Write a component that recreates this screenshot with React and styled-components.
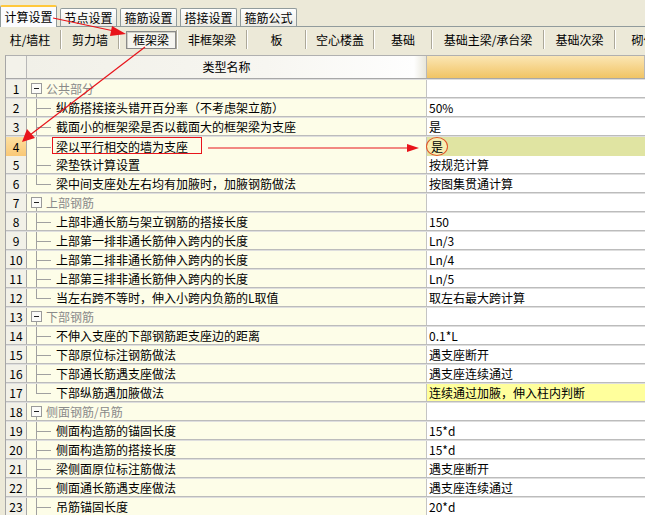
import React from "react";
import styled, { createGlobalStyle, css } from "styled-components";

const GlobalStyle = createGlobalStyle`
  html, body {
    margin: 0;
    padding: 0;
    background: #ece9d8;
  }
  body {
    font-family: "Noto Sans CJK SC", "Liberation Sans", sans-serif;
    font-size: 12px;
    color: #000;
  }
`;

const Window = styled.div`
  position: relative;
  width: 645px;
  height: 515px;
  overflow: hidden;
  background: #ece9d8;
`;

const TabStrip = styled.div`
  display: flex;
  align-items: flex-end;
  gap: 3px;
  height: 27px;
  box-sizing: border-box;
  border-bottom: 1px solid #919b9c;
`;

const Tab = styled.div`
  width: 57px;
  height: 18px;
  box-sizing: border-box;
  display: flex;
  align-items: center;
  justify-content: center;
  line-height: 16px;
  border: 1px solid #919b9c;
  border-bottom: none;
  border-radius: 2px 2px 0 0;
  background: linear-gradient(#ffffff, #ecebe5);
  white-space: nowrap;
  ${(p) =>
    p.$active &&
    css`
      height: 22px;
      margin-bottom: -1px;
      border-top: 2px solid #ffc83c;
      background: #fcfcfe;
    `}
`;

const SubBar = styled.div`
  display: flex;
  height: 25px;
  align-items: stretch;
  white-space: nowrap;
`;

const SubTab = styled.div`
  flex: none;
  width: ${(p) => p.$w}px;
  box-sizing: border-box;
  display: flex;
  align-items: center;
  justify-content: ${(p) => (p.$active ? "flex-end" : "center")};
  border-right: 1px solid #aca899;
  box-shadow: 1px 0 0 #ffffff;
  margin: 3px 1px 3px 0;
`;

const SubLabel = styled.span`
  line-height: 16px;
  ${(p) =>
    p.$active &&
    css`
      padding: 0 6px;
      border: 1px solid #8a8a8a;
      background: #f6f5f0;
      box-shadow: inset 1px 1px 0 #d0cfc6;
    `}
`;

const Grid = styled.div`
  margin: 3px 0 0 5px;
  border-left: 1px solid #a6a6a6;
  border-top: 1px solid #b0b0b0;
`;

const cols = css`
  display: grid;
  grid-template-columns: 21px 400px 1fr;
`;

const HeadRow = styled.div`
  ${cols};
  height: 22px;
  border-bottom: 1px solid #a8a8a8;
`;

const HeadCell = styled.div`
  display: flex;
  align-items: center;
  justify-content: center;
  line-height: 16px;
  border-right: 1px solid #b8b8b8;
  background: ${(p) =>
    p.$tone === "orange"
      ? "linear-gradient(#fbe6b4, #f1c464)"
      : p.$tone === "plain"
      ? "#f3f2ea"
      : "linear-gradient(to right, #f1f0e8 0%, #f7f6f1 60%, #fefefe 97%, #e8e6da 100%)"};
`;

const Row = styled.div`
  ${cols};
  height: 19px;
  box-sizing: border-box;
  border-top: 1px solid #dedede;
  border-bottom: 1px solid #bcbcbc;
`;

const NumCell = styled.div`
  display: flex;
  align-items: center;
  justify-content: center;
  line-height: 17px;
  border-right: 1px solid #a8a8a8;
  background: ${(p) => (p.$hot ? "linear-gradient(#fde0a0, #f9c876)" : "#f2f1e8")};
`;

const NameCell = styled.div`
  display: flex;
  align-items: center;
  line-height: 17px;
  border-right: 1px solid #c4c4c4;
  background: #fdfde8;
  white-space: nowrap;
  overflow: hidden;
  color: ${(p) => (p.$group ? "#8a8a8a" : "#000")};
`;

const Gutter = styled.span`
  position: relative;
  flex: none;
  align-self: stretch;
  width: ${(p) => (p.$group ? 19 : 29)}px;

  ${(p) =>
    !p.$group &&
    css`
      &::before {
        content: "";
        position: absolute;
        left: 9px;
        top: -1px;
        bottom: ${p.$last ? "50%" : "-1px"};
        border-left: 1px solid #a0a0a0;
      }
      &::after {
        content: "";
        position: absolute;
        left: 9px;
        width: 15px;
        top: 50%;
        border-top: 1px solid #a0a0a0;
      }
    `}

  ${(p) =>
    p.$group &&
    css`
      &::after {
        content: "";
        position: absolute;
        left: 9px;
        top: 14px;
        bottom: -1px;
        border-left: 1px solid #a0a0a0;
      }
    `}
`;

const Toggle = styled.span`
  position: absolute;
  left: 4px;
  top: 3px;
  width: 11px;
  height: 11px;
  box-sizing: border-box;
  border: 1px solid #9a9a9a;
  background: #fbfbf8;
  &::before {
    content: "";
    position: absolute;
    left: 2px;
    right: 2px;
    top: 4px;
    border-top: 1px solid #202020;
  }
`;

const ValueCell = styled.div`
  display: flex;
  align-items: center;
  padding-left: 2px;
  line-height: 17px;
  white-space: nowrap;
  overflow: visible;
  background: ${(p) => p.$bg || "#ffffff"};
`;

/* the red ring drawn round the answer in row 4 */
const Ringed = styled.span`
  margin-left: -3px;
  width: 22px;
  height: 19px;
  box-sizing: border-box;
  display: flex;
  align-items: center;
  justify-content: center;
  border: 1px solid #e0552a;
  border-radius: 50%;
  background: #f6eeb2;
`;

const Overlay = styled.svg`
  position: absolute;
  left: 0;
  top: 0;
  width: 645px;
  height: 515px;
  pointer-events: none;
`;

const topTabs = ["计算设置", "节点设置", "箍筋设置", "搭接设置", "箍筋公式"];

const subTabs = [
  { label: "柱/墙柱", w: 61 },
  { label: "剪力墙", w: 57 },
  { label: "框架梁", w: 57, active: true },
  { label: "非框架梁", w: 69 },
  { label: "板", w: 58 },
  { label: "空心楼盖", w: 67 },
  { label: "基础", w: 57 },
  { label: "基础主梁/承台梁", w: 111 },
  { label: "基础次梁", w: 70 },
  { label: "砌体加筋", w: 80 },
];

const rows = [
  { name: "公共部分", group: true },
  { name: "纵筋搭接接头错开百分率（不考虑架立筋）", value: "50%" },
  { name: "截面小的框架梁是否以截面大的框架梁为支座", value: "是" },
  { name: "梁以平行相交的墙为支座", value: "是", bg: "#e0e4a2", hot: true, ring: true },
  { name: "梁垫铁计算设置", value: "按规范计算" },
  { name: "梁中间支座处左右均有加腋时，加腋钢筋做法", value: "按图集贯通计算", last: true },
  { name: "上部钢筋", group: true },
  { name: "上部非通长筋与架立钢筋的搭接长度", value: "150" },
  { name: "上部第一排非通长筋伸入跨内的长度", value: "Ln/3" },
  { name: "上部第二排非通长筋伸入跨内的长度", value: "Ln/4" },
  { name: "上部第三排非通长筋伸入跨内的长度", value: "Ln/5" },
  { name: "当左右跨不等时，伸入小跨内负筋的L取值", value: "取左右最大跨计算", last: true },
  { name: "下部钢筋", group: true },
  { name: "不伸入支座的下部钢筋距支座边的距离", value: "0.1*L" },
  { name: "下部原位标注钢筋做法", value: "遇支座断开" },
  { name: "下部通长筋遇支座做法", value: "遇支座连续通过" },
  { name: "下部纵筋遇加腋做法", value: "连续通过加腋，伸入柱内判断", bg: "#ffff9c", last: true },
  { name: "侧面钢筋/吊筋", group: true },
  { name: "侧面构造筋的锚固长度", value: "15*d" },
  { name: "侧面构造筋的搭接长度", value: "15*d" },
  { name: "梁侧面原位标注筋做法", value: "遇支座断开" },
  { name: "侧面通长筋遇支座做法", value: "遇支座连续通过" },
  { name: "吊筋锚固长度", value: "20*d" },
];

const RED = "#e8141b";

const App = () => {
  return (
    <Window>
      <GlobalStyle />
      <TabStrip>
        {topTabs.map((t, i) => (
          <Tab key={t} $active={i === 0}>
            {t}
          </Tab>
        ))}
      </TabStrip>
      <SubBar>
        {subTabs.map((t) => (
          <SubTab key={t.label} $w={t.w} $active={t.active}>
            <SubLabel $active={t.active}>{t.label}</SubLabel>
          </SubTab>
        ))}
      </SubBar>
      <Grid>
        <HeadRow>
          <HeadCell $tone="plain" />
          <HeadCell>类型名称</HeadCell>
          <HeadCell $tone="orange" />
        </HeadRow>
        {rows.map((r, i) => (
          <Row key={i}>
            <NumCell $hot={r.hot}>{i + 1}</NumCell>
            <NameCell $group={r.group}>
              <Gutter $group={r.group} $last={r.last}>
                {r.group && <Toggle />}
              </Gutter>
              {r.name}
            </NameCell>
            <ValueCell $bg={r.bg}>
              {r.ring ? <Ringed>{r.value}</Ringed> : r.value}
            </ValueCell>
          </Row>
        ))}
      </Grid>

      <Overlay viewBox="0 0 645 515">
        {/* tab -> 框架梁 */}
        <line x1="53" y1="18" x2="114" y2="31" stroke={RED} strokeWidth="1.2" />
        <polygon points="126,34 112,26 110,36" fill={RED} />
        {/* 框架梁 -> row 4 */}
        <line x1="145" y1="47" x2="30" y2="135" stroke={RED} strokeWidth="1.2" />
        <polygon points="22,142 27,129 35,138" fill={RED} />
        {/* highlighted row */}
        <rect x="52.5" y="137.5" width="149" height="16" fill="none" stroke={RED} strokeWidth="1" />
        <line x1="208" y1="148" x2="408" y2="148" stroke={RED} strokeWidth="1.2" />
        <polygon points="419,148 407,144 407,152" fill={RED} />
      </Overlay>
    </Window>
  );
};

export default App;
